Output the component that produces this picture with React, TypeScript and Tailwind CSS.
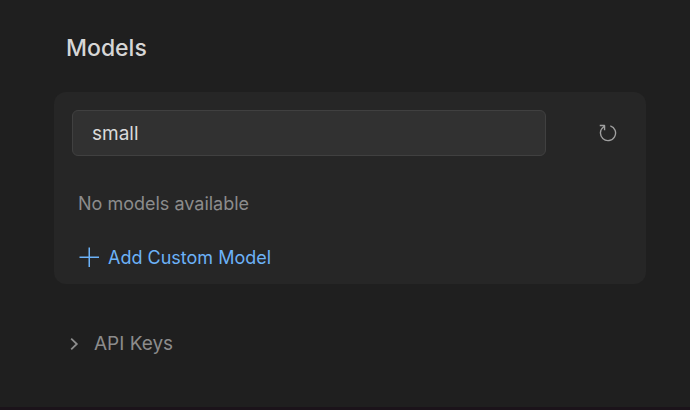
import { useState } from "react";

function RefreshIcon() {
  return (
    <svg viewBox="0 0 16 16" fill="currentColor" className="h-[22px] w-[22px]" aria-hidden="true">
      <path
        fillRule="evenodd"
        clipRule="evenodd"
        d="M4.681 3H2V2h3.5l.5.5V6H5V4a5 5 0 1 0 4.53-.761l.302-.954A6 6 0 1 1 4.681 3z"
      />
    </svg>
  );
}

function PlusIcon() {
  return (
    <svg viewBox="0 0 16 16" fill="currentColor" className="h-6 w-6" aria-hidden="true">
      <path d="M14 7v1H8v6H7V8H1V7h6V1h1v6h6z" />
    </svg>
  );
}

function ChevronIcon({ open }: { open: boolean }) {
  return (
    <svg
      viewBox="0 0 16 16"
      fill="none"
      stroke="currentColor"
      strokeWidth="1.8"
      className={open ? "h-4 w-4 rotate-90" : "h-4 w-4"}
      aria-hidden="true"
    >
      <path d="M5.2 2.6 10.8 8l-5.6 5.4" />
    </svg>
  );
}

export default function App() {
  const [query, setQuery] = useState<string>("small");
  const [showKeys, setShowKeys] = useState<boolean>(false);

  return (
    <div className="min-h-screen flex flex-col bg-[#1f1f1f] border-b-3 border-[#1b131a] font-['Inter','Liberation_Sans',sans-serif]">
      <main className="flex flex-col pl-[54px] pr-11 pt-8">
        <h1 className="px-3 text-[23px] leading-8 font-medium text-[#d6d6d6]">Models</h1>
        <section className="mt-7 flex flex-col rounded-xl bg-[#262626] px-[18px] pt-[18px] pb-3">
          <div className="flex items-center">
            <input
              type="text"
              aria-label="Search models"
              value={query}
              onChange={(e) => setQuery(e.target.value)}
              className="min-w-0 flex-1 h-[46px] px-[19px] rounded-md border border-[#404040] bg-[#313131] text-[19px] text-[#dadada] outline-none"
            />
            <button type="button" aria-label="Refresh models" className="ml-[51px] mr-[9px] text-[#a0a0a0]">
              <RefreshIcon />
            </button>
          </div>
          <p className="mt-[34px] px-[6px] text-lg leading-7 text-[#8c8c8c]">No models available</p>
          <button type="button" className="mt-[26px] px-[6px] flex items-center gap-[6px] self-start text-lg leading-7 text-[#6cb2f8]">
            <PlusIcon />
            Add Custom Model
          </button>
        </section>
        <button
          type="button"
          onClick={() => setShowKeys(!showKeys)}
          aria-expanded={showKeys}
          className="mt-[46px] px-3 flex items-center gap-3 self-start text-[19px] leading-7 text-[#8c8c8c]"
        >
          <ChevronIcon open={showKeys} />
          API Keys
        </button>
      </main>
    </div>
  );
}
